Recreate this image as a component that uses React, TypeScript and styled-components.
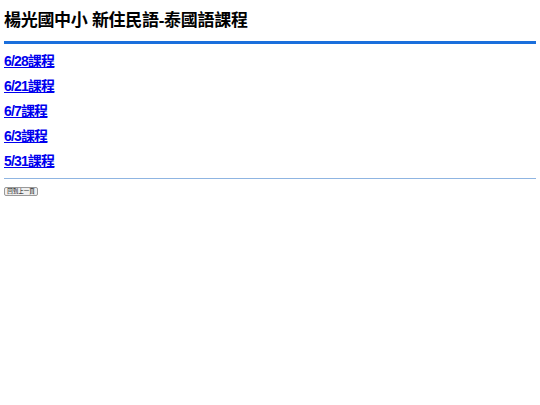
import React from 'react'
import styled, { createGlobalStyle } from 'styled-components'

const GlobalStyle = createGlobalStyle`
    body {
        margin: 0;
        padding: 0 4px;
        background: #fff;
        font-family: "Liberation Sans", Arial, "Noto Sans CJK TC", sans-serif;
    }
`

const Page = styled.div`
    display: flex;
    flex-direction: column;
`

const Title = styled.h1`
    margin: 10px 0 0;
    font-size: 17px;
    font-weight: 700;
    line-height: 22px;
    letter-spacing: -0.3px;
    color: #000;
`

const Rule = styled.div<{ $thick?: boolean }>`
    height: ${p => (p.$thick ? '3px' : '1px')};
    background: ${p => (p.$thick ? '#1a6fdc' : '#8fb5e2')};
    margin-top: ${p => (p.$thick ? '9px' : '8px')};
`

const LinkList = styled.ul`
    list-style: none;
    margin: 8px 0 0;
    padding: 0;
    display: flex;
    flex-direction: column;
    gap: 7px;
`

const Item = styled.li`
    display: flex;
    height: 18px;
    align-items: center;
`

const CourseLink = styled.a`
    font-size: 14px;
    font-weight: 700;
    line-height: 18px;
    letter-spacing: -0.85px;
    color: #0000ee;
    text-decoration: underline;
`

const BackBtn = styled.button`
    align-self: flex-start;
    margin-top: 8px;
    padding: 0;
    width: 34px;
    height: 9px;
    font-size: 5.5px;
    line-height: 7px;
    white-space: nowrap;
    font-family: "Noto Sans CJK TC", sans-serif;
    border: 1px solid #999;
    border-radius: 2px;
    background: #efefef;
    color: #000;
`

const courses = ['6/28課程', '6/21課程', '6/7課程', '6/3課程', '5/31課程']

export default function App() {
    return (
        <Page>
            <GlobalStyle />
            <Title>楊光國中小 新住民語-泰國語課程</Title>
            <Rule $thick />
            <LinkList>
                {courses.map(c => (
                    <Item key={c}>
                        <CourseLink href="#">{c}</CourseLink>
                    </Item>
                ))}
            </LinkList>
            <Rule />
            <BackBtn>回到上一頁</BackBtn>
        </Page>
    )
}
